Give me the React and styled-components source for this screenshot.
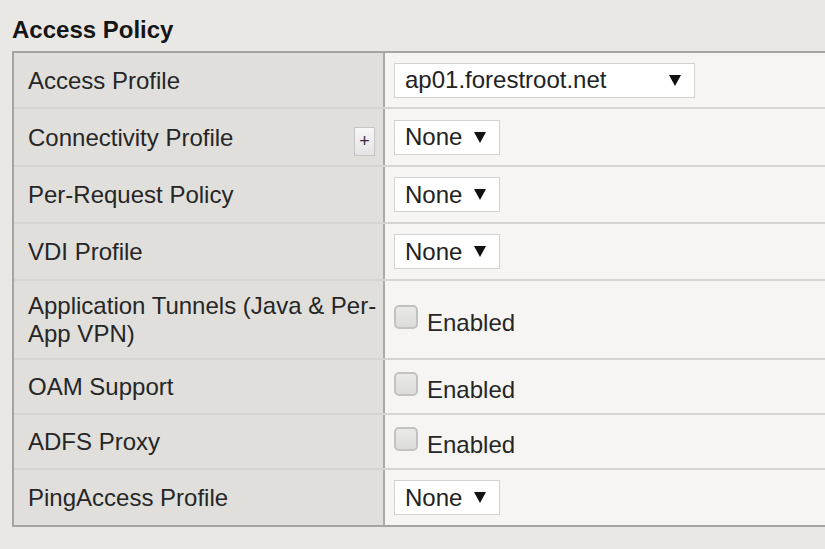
import React from "react";
import styled, { createGlobalStyle } from "styled-components";

const GlobalStyle = createGlobalStyle`
  html, body {
    margin: 0;
    padding: 0;
    background: #e9e8e5;
    overflow: hidden;
  }
  body {
    font-family: "Liberation Sans", Arial, sans-serif;
  }
`;

const Page = styled.div`
  padding: 16px 0 0 12px;
  width: 825px;
  height: 549px;
  box-sizing: border-box;
`;

const Title = styled.h2`
  margin: 0 0 8px;
  font-size: 24px;
  line-height: 27px;
  font-weight: bold;
  color: #151515;
`;

const Table = styled.div`
  width: 830px;
  border: 2px solid #a4a4a2;
  border-right: none;
  background: #f6f5f3;
`;

const Row = styled.div`
  display: grid;
  grid-template-columns: 371px 1fr;
  height: ${(p) => p.$height}px;
  box-sizing: border-box;
  border-bottom: ${(p) => (p.$last ? "none" : "2px solid #d6d5d2")};
`;

const LabelCell = styled.div`
  display: flex;
  align-items: center;
  justify-content: space-between;
  padding: 1px 8px 0 14px;
  background: #e0dfdc;
  border-right: 2px solid #aaa9a7;
  font-size: 24px;
  line-height: 28px;
  color: #262626;
  overflow: hidden;
`;

const LabelText = styled.span`
  white-space: nowrap;
`;

const ValueCell = styled.div`
  display: flex;
  align-items: center;
  padding-left: 9px;
  font-size: 24px;
  color: #262626;
`;

const PlusButton = styled.div`
  width: 21px;
  height: 29px;
  box-sizing: border-box;
  margin-top: 7px;
  border: 1px solid #c4c4c4;
  background: linear-gradient(#f7f7f7, #e4e4e4);
  display: flex;
  align-items: center;
  justify-content: center;
  font-size: 18px;
  color: #3b2846;
`;

const SelectBox = styled.div`
  width: ${(p) => p.$width}px;
  height: 35px;
  box-sizing: border-box;
  border: 1px solid #d2d2d0;
  background: #ffffff;
  display: flex;
  align-items: center;
  justify-content: space-between;
  padding: 0 13px 0 10px;
  font-size: 24px;
  color: #222;
`;

const CheckRow = styled.label`
  display: flex;
  align-items: center;
  gap: 9px;
`;

const CheckBox = styled.span`
  width: 24px;
  height: 24px;
  box-sizing: border-box;
  border: 2px solid #c2c2c0;
  border-radius: 5px;
  background: linear-gradient(#e9e9e8, #dcdcdb);
  margin-bottom: 6px;
`;

const CheckText = styled.span`
  margin-top: 6px;
`;

function Arrow() {
  return (
    <svg width="12" height="11" viewBox="0 0 12 11">
      <polygon points="0,0 12,0 6,11" fill="#111" />
    </svg>
  );
}

function Select({ value, width }) {
  return (
    <SelectBox $width={width}>
      <span>{value}</span>
      <Arrow />
    </SelectBox>
  );
}

function Checkbox() {
  return (
    <CheckRow>
      <CheckBox />
      <CheckText>Enabled</CheckText>
    </CheckRow>
  );
}

const rows = [
  { label: "Access Profile", height: 56, kind: "select", value: "ap01.forestroot.net", width: 301 },
  { label: "Connectivity Profile", height: 58, kind: "select", value: "None", width: 106, plus: true },
  { label: "Per-Request Policy", height: 57, kind: "select", value: "None", width: 106 },
  { label: "VDI Profile", height: 57, kind: "select", value: "None", width: 106 },
  {
    label: (
      <>
        Application Tunnels (Java &amp; Per-
        <br />
        App VPN)
      </>
    ),
    height: 79,
    kind: "check",
  },
  { label: "OAM Support", height: 55, kind: "check" },
  { label: "ADFS Proxy", height: 55, kind: "check" },
  { label: "PingAccess Profile", height: 55, kind: "select", value: "None", width: 106 },
];

export default function App() {
  return (
    <Page>
      <GlobalStyle />
      <Title>Access Policy</Title>
      <Table>
        {rows.map((r, i) => (
          <Row key={i} $height={r.height} $last={i === rows.length - 1}>
            <LabelCell>
              <LabelText>{r.label}</LabelText>
              {r.plus && <PlusButton>+</PlusButton>}
            </LabelCell>
            <ValueCell>
              {r.kind === "select" ? <Select value={r.value} width={r.width} /> : <Checkbox />}
            </ValueCell>
          </Row>
        ))}
      </Table>
    </Page>
  );
}
